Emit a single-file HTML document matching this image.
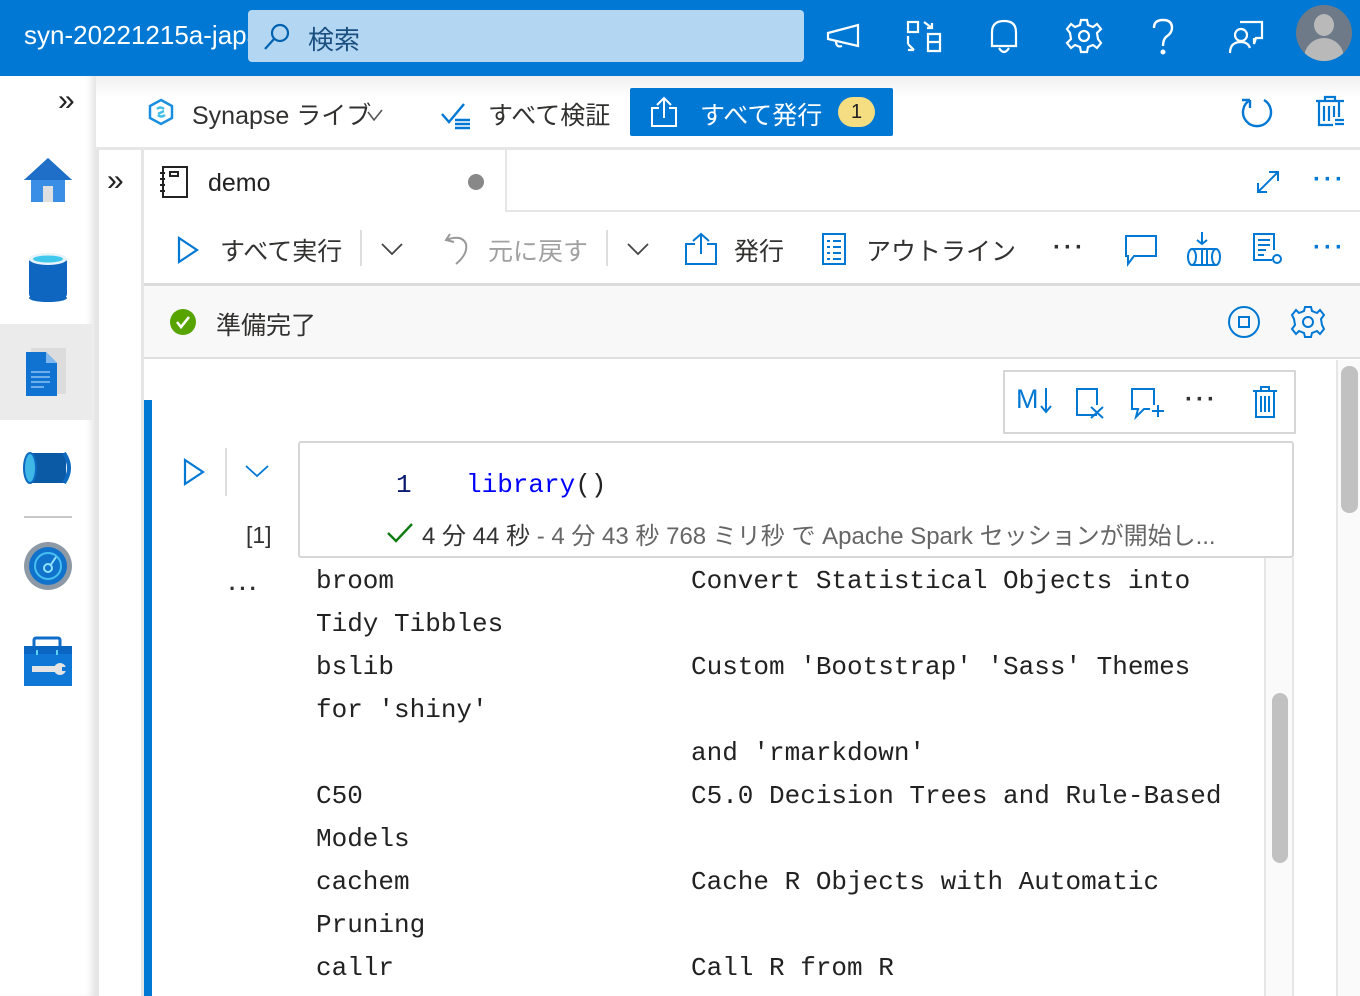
<!DOCTYPE html>
<html><head><meta charset="utf-8"><style>
*{box-sizing:border-box;margin:0;padding:0}
body{width:1360px;height:996px;overflow:hidden;background:#fff;font-family:"Liberation Sans","Noto Sans CJK JP",sans-serif;color:#323130;position:relative}
.a{position:absolute}
.mono{font-family:"Liberation Mono","Noto Sans CJK JP",monospace;font-size:26px;color:#222;white-space:pre}
svg{position:absolute;overflow:visible}
.dots{font-weight:bold;letter-spacing:3px}
</style></head><body>
<!-- top bar -->
<div class="a" style="left:0;top:0;width:1360px;height:76px;background:#0078d4"></div>
<div class="a" style="left:24px;top:20px;font-size:26px;color:#fff;width:224px;overflow:hidden;white-space:nowrap">syn-20221215a-japan</div>
<div class="a" style="left:248px;top:10px;width:556px;height:52px;background:#b3d6f2;border-radius:4px"></div>
<svg style="left:262px;top:22px" width="30" height="30" fill="none" stroke="#0063b1" stroke-width="2.2"><circle cx="18" cy="11" r="8"/><path d="M12 17 L3 27"/></svg>
<div class="a" style="left:308px;top:20px;font-size:26px;color:#1a4f80">検索</div>
<svg style="left:826px;top:22px" width="36" height="30" fill="none" stroke="#fff" stroke-width="2.2"><path d="M2 11 L32 3 V24 L2 17 Z M10 19 Q10 26 16 24"/></svg>
<svg style="left:906px;top:20px" width="36" height="34" fill="none" stroke="#fff" stroke-width="2.2"><rect x="2" y="2" width="10" height="10"/><path d="M2 16 V24 M22 14 H34 V31 H22 Z M22 22 H34 M18 2 L26 8 M26 3 V8 H21 M2 24 L8 30 M2 30 H8"/></svg>
<svg style="left:988px;top:18px" width="32" height="38" fill="none" stroke="#fff" stroke-width="2.2"><path d="M4 28 V14 Q4 3 16 3 Q28 3 28 14 V28 Z M11 30 Q16 38 21 30"/></svg>
<svg style="left:1066px;top:18px" width="36" height="36" fill="none" stroke="#fff" stroke-width="2.2"><circle cx="18" cy="18" r="5"/><path d="M15 2 H21 L22 7 L27 9 L31 6 L35 11 L31 15 L32 21 L35 25 L31 30 L27 27 L22 29 L21 34 H15 L14 29 L9 27 L5 30 L1 25 L5 21 L4 15 L1 11 L5 6 L9 9 L14 7 Z"/></svg>
<svg style="left:1152px;top:18px" width="24" height="38" fill="none" stroke="#fff" stroke-width="2.4"><path d="M2 10 Q2 2 11 2 Q20 2 20 10 Q20 15 14 19 Q11 22 11 28"/><circle cx="11" cy="34" r="1.3" fill="#fff"/></svg>
<svg style="left:1228px;top:18px" width="36" height="36" fill="none" stroke="#fff" stroke-width="2.2"><path d="M12 4 H34 V20 H28 L26 26 V20"/><circle cx="13" cy="17" r="6"/><path d="M2 35 Q2 24 13 24 Q20 24 22 30"/></svg>
<div class="a" style="left:1296px;top:5px;width:56px;height:56px;border-radius:50%;background:#6e7a87;overflow:hidden">
<div class="a" style="left:18px;top:9px;width:20px;height:22px;border-radius:50%;background:#b9b9b9"></div>
<div class="a" style="left:8px;top:33px;width:40px;height:30px;border-radius:20px 20px 0 0;background:#b9b9b9"></div></div>

<!-- left sidebar -->
<div class="a" style="left:0;top:76px;width:96px;height:920px;background:#fff;box-shadow:inset -8px 0 8px -4px #e2e2e2"></div>
<div class="a" style="left:0;top:324px;width:92px;height:96px;background:#ebebeb"></div>
<div class="a" style="left:58px;top:84px;font-size:30px;color:#222">»</div>
<svg style="left:24px;top:156px" width="48" height="48"><path d="M24 2 L48 24 H41 V46 H7 V24 H0 Z" fill="#3a8ee6"/><path d="M24 2 L48 24 H0 Z" fill="#1f6fc8"/><rect x="19" y="30" width="10" height="16" fill="#e0e0e0"/></svg>
<svg style="left:29px;top:252px" width="38" height="50"><rect x="0" y="6" width="38" height="40" rx="4" fill="#0f66c0"/><ellipse cx="19" cy="46" rx="19" ry="4" fill="#0f66c0"/><ellipse cx="19" cy="7" rx="19" ry="6" fill="#e6f4fa"/><ellipse cx="19" cy="7" rx="15" ry="3.5" fill="#40c8ec"/></svg>
<svg style="left:26px;top:348px" width="42" height="50"><rect x="5" y="0" width="35" height="46" fill="#dcdcdc"/><path d="M0 4 H20 L31 15 V48 H0 Z" fill="#1173d1"/><path d="M20 4 L31 15 H20 Z" fill="#7fb7ef"/><path d="M5 24 H24 M5 29 H24 M5 34 H24 M5 39 H18" stroke="#8ec2f3" stroke-width="1.5"/></svg>
<svg style="left:22px;top:450px" width="52" height="36"><rect x="8" y="3" width="36" height="30" fill="#0b5aa6"/><ellipse cx="8" cy="18" rx="6" ry="15" fill="#3fb8e8" stroke="#0d6ac0" stroke-width="2"/><path d="M42 3 Q52 18 42 33" stroke="#0d6ac0" stroke-width="4" fill="none"/></svg>
<div class="a" style="left:24px;top:516px;width:48px;height:2px;background:#c8c8c8"></div>
<svg style="left:24px;top:542px" width="48" height="48"><circle cx="24" cy="24" r="24" fill="#8d9aa6"/><circle cx="24" cy="24" r="19" fill="#1172cc"/><circle cx="24" cy="24" r="13" fill="none" stroke="#45c0f0" stroke-width="2"/><circle cx="24" cy="26" r="4" fill="none" stroke="#8ee0ff" stroke-width="2"/><path d="M26 24 L32 15" stroke="#8ee0ff" stroke-width="2"/></svg>
<svg style="left:24px;top:638px" width="48" height="48"><rect x="10" y="0" width="26" height="10" rx="2" fill="none" stroke="#0f6ec8" stroke-width="3"/><rect x="0" y="8" width="48" height="40" fill="#0f78d6"/><rect x="0" y="8" width="48" height="8" fill="#0a66c0"/><rect x="12" y="12" width="2" height="5" fill="#5ad2f4"/><rect x="32" y="12" width="2" height="5" fill="#5ad2f4"/><rect x="8" y="28" width="24" height="6" fill="#e4e4e4"/><circle cx="36" cy="31" r="6" fill="#e4e4e4"/><rect x="38" y="29" width="6" height="4" fill="#0f78d6"/></svg>

<!-- toolbar 1 -->
<div class="a" style="left:96px;top:76px;width:1264px;height:72px;background:linear-gradient(#f0f0f0,#fff 30%)"></div>
<div class="a" style="left:96px;top:147px;width:1264px;height:3px;background:#e6e6e6"></div>
<svg style="left:148px;top:98px" width="26" height="28" fill="none" stroke="#1a8fe0" stroke-width="2.5"><path d="M13 2 L24 8 V20 L13 26 L2 20 V8 Z"/><path d="M9 11 Q12 8 16 11 M10 16 L16 13 M10 17 Q13 20 17 17" stroke="#40c0e8"/></svg>
<div class="a" style="left:192px;top:96px;font-size:25px;color:#323130">Synapse ライブ</div>
<svg style="left:366px;top:108px" width="18" height="14" fill="none" stroke="#555" stroke-width="1.6"><path d="M2 4 L8 12 L16 2"/></svg>
<svg style="left:440px;top:102px" width="34" height="28" fill="none" stroke="#0078d4" stroke-width="2.4"><path d="M2 12 L9 20 L24 2 M15 18 H30 M15 22 H30 M15 26 H30"/></svg>
<div class="a" style="left:488px;top:96px;font-size:25px;color:#323130">すべて検証</div>
<div class="a" style="left:630px;top:88px;width:263px;height:48px;background:#0078d4;border-radius:2px"></div>
<svg style="left:650px;top:96px" width="28" height="32" fill="none" stroke="#fff" stroke-width="2"><path d="M14 2 V22 M7 9 L14 2 L21 9 M9 12 H2 V30 H26 V12 H19"/></svg>
<div class="a" style="left:700px;top:96px;font-size:25px;color:#fff">すべて発行</div>
<div class="a" style="left:838px;top:97px;width:37px;height:30px;border-radius:15px;background:#f5dd82;color:#222;font-size:20px;text-align:center;line-height:30px">1</div>
<svg style="left:1240px;top:96px" width="34" height="34" fill="none" stroke="#0078d4" stroke-width="2.4"><path d="M10 4 A14 14 0 1 0 24 4 M10 4 V12 M10 4 H2"/></svg>
<svg style="left:1315px;top:95px" width="30" height="34" fill="none" stroke="#0078d4" stroke-width="2.2"><path d="M1 6 H29 M10 6 V2 H20 V6 M4 6 V30 H18 M9 11 V26 M14 11 V26 M19 11 V22 M24 6 V22 M20 25 H29 M20 29 H29"/></svg>

<!-- second column -->
<div class="a" style="left:96px;top:150px;width:3px;height:846px;background:#e6e6e6"></div>
<div class="a" style="left:141px;top:150px;width:3px;height:846px;background:#e6e6e6"></div>
<div class="a" style="left:107px;top:164px;font-size:30px;color:#222">»</div>

<!-- tab row -->
<div class="a" style="left:505px;top:150px;width:855px;height:62px;border-left:2px solid #e6e6e6;border-bottom:2px solid #e6e6e6"></div>
<svg style="left:160px;top:165px" width="28" height="34" fill="none" stroke="#222" stroke-width="2"><rect x="3" y="2" width="24" height="30"/><rect x="10" y="7" width="8" height="4"/><path d="M0 8 H5 M0 14 H5 M0 20 H5 M0 26 H5"/></svg>
<div class="a" style="left:208px;top:169px;font-size:25px;color:#222">demo</div>
<div class="a" style="left:468px;top:174px;width:16px;height:16px;border-radius:50%;background:#888"></div>
<svg style="left:1256px;top:170px" width="24" height="24" fill="none" stroke="#0078d4" stroke-width="2"><path d="M2 22 L22 2 M2 13 V22 H11 M13 2 H22 V11"/></svg>
<div class="a dots" style="left:1313px;top:166px;font-size:24px;color:#0078d4">···</div>

<!-- toolbar 2 -->
<div class="a" style="left:144px;top:283px;width:1216px;height:3px;background:#dcdcdc"></div>
<svg style="left:176px;top:236px" width="24" height="28" fill="none" stroke="#0078d4" stroke-width="2.2"><path d="M3 2 L21 14 L3 26 Z"/></svg>
<div class="a" style="left:220px;top:232px;font-size:25px;color:#323130">すべて実行</div>
<div class="a" style="left:360px;top:230px;width:2px;height:36px;background:#ddd"></div>
<svg style="left:380px;top:242px" width="24" height="14" fill="none" stroke="#444" stroke-width="1.8"><path d="M2 2 L12 12 L22 2"/></svg>
<svg style="left:442px;top:232px" width="28" height="34" fill="none" stroke="#999" stroke-width="2"><path d="M8 2 L4 8 L12 10 M4 8 Q20 2 24 12 Q26 22 14 32"/></svg>
<div class="a" style="left:488px;top:232px;font-size:25px;color:#a0a0a0">元に戻す</div>
<div class="a" style="left:606px;top:230px;width:2px;height:36px;background:#ddd"></div>
<svg style="left:626px;top:242px" width="24" height="14" fill="none" stroke="#444" stroke-width="1.8"><path d="M2 2 L12 12 L22 2"/></svg>
<svg style="left:684px;top:232px" width="34" height="34" fill="none" stroke="#0078d4" stroke-width="2"><path d="M17 2 V22 M9 9 L17 2 L25 9 M11 12 H2 V32 H32 V12 H23"/></svg>
<div class="a" style="left:734px;top:232px;font-size:25px;color:#323130">発行</div>
<svg style="left:822px;top:233px" width="24" height="32" fill="none" stroke="#0078d4" stroke-width="2"><rect x="1" y="1" width="22" height="30"/><path d="M5 8 H8 M11 8 H19 M5 14 H8 M11 14 H19 M5 20 H8 M11 20 H19 M5 26 H8 M11 26 H19"/></svg>
<div class="a" style="left:866px;top:232px;font-size:25px;color:#323130">アウトライン</div>
<div class="a dots" style="left:1053px;top:234px;font-size:24px;color:#323130">···</div>
<svg style="left:1124px;top:234px" width="34" height="32" fill="none" stroke="#0078d4" stroke-width="2"><path d="M2 2 H32 V22 H10 L4 30 V22 H2 Z"/></svg>
<svg style="left:1186px;top:230px" width="36" height="36" fill="none" stroke="#0078d4" stroke-width="2"><path d="M16 2 V14 M11 10 L16 14 L21 10"/><ellipse cx="6" cy="27" rx="4" ry="8"/><path d="M6 19 H30 M6 35 H30"/><ellipse cx="30" cy="27" rx="4" ry="8"/><path d="M16 19 V35 M21 19 V35"/></svg>
<svg style="left:1252px;top:232px" width="32" height="34" fill="none" stroke="#0078d4" stroke-width="2"><path d="M20 28 H2 V2 H22 V18 M6 8 H18 M6 13 H18 M6 18 H14 M6 23 H12"/><circle cx="25" cy="27" r="4"/></svg>
<div class="a dots" style="left:1313px;top:234px;font-size:24px;color:#0078d4">···</div>

<!-- status -->
<div class="a" style="left:144px;top:286px;width:1216px;height:72px;background:#f8f8f8"></div>
<div class="a" style="left:144px;top:357px;width:1216px;height:2px;background:#e0e0e0"></div>
<svg style="left:170px;top:309px" width="26" height="26"><circle cx="13" cy="13" r="13" fill="#57a300"/><path d="M7 13 L11 18 L19 8" stroke="#fff" stroke-width="2.6" fill="none"/></svg>
<div class="a" style="left:216px;top:306px;font-size:25px;color:#323130">準備完了</div>
<svg style="left:1228px;top:306px" width="32" height="32" fill="none" stroke="#0078d4" stroke-width="2"><circle cx="16" cy="16" r="15"/><rect x="11" y="11" width="10" height="10"/></svg>
<svg style="left:1292px;top:306px" width="32" height="32" fill="none" stroke="#0078d4" stroke-width="2"><circle cx="16" cy="16" r="5"/><path d="M13 1 H19 L20 5 L25 7 L28 4 L32 9 L29 13 L30 19 L32 23 L28 28 L25 25 L20 27 L19 31 H13 L12 27 L7 25 L4 28 L0 23 L3 19 L2 13 L0 9 L4 4 L7 7 L12 5 Z"/></svg>

<!-- content -->
<div class="a" style="left:144px;top:400px;width:8px;height:596px;background:#0078d4"></div>
<div class="a" style="left:1003px;top:370px;width:293px;height:64px;border:2px solid #d6d6d6;background:#fff"></div>
<div class="a" style="left:1016px;top:384px;font-size:27px;color:#0078d4">M</div>
<svg style="left:1040px;top:388px" width="12" height="26" fill="none" stroke="#0078d4" stroke-width="2"><path d="M6 0 V24 M1 18 L6 24 L11 18"/></svg>
<svg style="left:1075px;top:387px" width="34" height="32" fill="none" stroke="#0078d4" stroke-width="2"><path d="M22 28 H2 V2 H22 V18 M16 20 L28 31 M28 20 L16 31"/></svg>
<svg style="left:1130px;top:387px" width="34" height="32" fill="none" stroke="#0078d4" stroke-width="2"><path d="M24 18 V2 H2 V22 H8 L6 30 L14 22 H20 M22 24 H34 M28 18 V30"/></svg>
<div class="a dots" style="left:1185px;top:386px;font-size:24px;color:#323130">···</div>
<svg style="left:1252px;top:385px" width="26" height="34" fill="none" stroke="#0078d4" stroke-width="2"><path d="M1 6 H25 M9 6 V2 H17 V6 M4 6 V32 H22 V6 M9 11 V27 M13 11 V27 M17 11 V27"/></svg>

<svg style="left:183px;top:458px" width="22" height="28" fill="none" stroke="#0078d4" stroke-width="2.2"><path d="M2 2 L20 14 L2 26 Z"/></svg>
<div class="a" style="left:225px;top:448px;width:2px;height:48px;background:#ddd"></div>
<svg style="left:244px;top:464px" width="26" height="14" fill="none" stroke="#0078d4" stroke-width="1.8"><path d="M2 2 L13 12 L24 2"/></svg>
<div class="a" style="left:246px;top:522px;font-size:23px;color:#323130">[1]</div>
<div class="a dots" style="left:229px;top:576px;font-size:22px;color:#323130">···</div>

<div class="a" style="left:298px;top:441px;width:996px;height:117px;border:2px solid #d6d6d6;border-radius:3px;background:#fff"></div>
<div class="a mono" style="left:396px;top:470px;color:#0a1a6e">1</div>
<div class="a mono" style="left:466px;top:470px;color:#0000ff">library<span style="color:#222">()</span></div>
<svg style="left:386px;top:522px" width="28" height="22" fill="none" stroke="#107c10" stroke-width="2.4"><path d="M2 11 L10 19 L26 2"/></svg>
<div class="a" style="left:422px;top:516px;font-size:24px;color:#333;white-space:nowrap">4 分 44 秒 <span style="color:#666;font-size:24px">- 4 分 43 秒 768 ミリ秒 で Apache Spark セッションが開始し...</span></div>

<div class="a" style="left:1264px;top:558px;width:2px;height:438px;background:#e6e6e6"></div>
<div class="a" style="left:1266px;top:558px;width:28px;height:438px;background:#fafafa;border-right:2px solid #e6e6e6"></div>
<div class="a" style="left:1272px;top:693px;width:16px;height:170px;border-radius:8px;background:#c1c1c1"></div>
<div class="a" style="left:1336px;top:360px;width:24px;height:636px;background:#fafafa;border-left:2px solid #e6e6e6"></div>
<div class="a" style="left:1341px;top:366px;width:17px;height:147px;border-radius:8px;background:#c1c1c1"></div>

<div class="a mono" style="left:316px;top:560px;line-height:43px">broom
Tidy Tibbles
bslib
for 'shiny'

C50
Models
cachem
Pruning
callr</div>
<div class="a mono" style="left:691px;top:560px;line-height:43px">Convert Statistical Objects into

Custom 'Bootstrap' 'Sass' Themes

and 'rmarkdown'
C5.0 Decision Trees and Rule-Based

Cache R Objects with Automatic

Call R from R</div>
</body></html>
